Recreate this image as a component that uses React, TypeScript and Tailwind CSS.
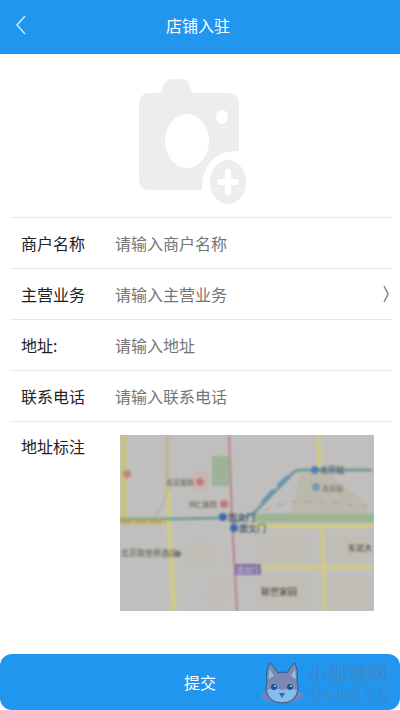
import type { ReactNode } from 'react';

const inputClass =
  'min-w-0 flex-1 bg-transparent text-base leading-6 text-[#555] outline-none placeholder:text-[#757575]';

function Row({ id, label, children }: { id: string; label: string; children: ReactNode }) {
  return (
    <div className="flex h-[51px] items-center border-b border-[#e9e9e9] pl-[11px]">
      <label htmlFor={id} className="w-[94px] shrink-0 text-base leading-6 text-[#222]">
        {label}
      </label>
      {children}
    </div>
  );
}

function CameraIcon() {
  return (
    <svg viewBox="0 0 108 126" className="h-[126px] w-[108px]" aria-hidden="true">
      <path
        fill="#ededed"
        d="M11 14H19Q23 14 24 8Q26 0 33 0H43Q49 0 51 8Q52 14 57 14H89Q100 14 100 26V72Q80 71 70 85Q62 96 63 111H11Q0 111 0 99V26Q0 14 11 14Z"
      />
      <ellipse cx="48" cy="62" rx="22" ry="27" fill="#fff" />
      <ellipse cx="83" cy="38" rx="6" ry="7" fill="#fff" />
      <ellipse cx="89" cy="103" rx="18" ry="22" fill="#ededed" />
      <path d="M89 93V113M81 103H97" stroke="#fff" strokeWidth="6" strokeLinecap="round" />
    </svg>
  );
}

function MapPreview() {
  return (
    <svg
      viewBox="0 0 254 176"
      preserveAspectRatio="none"
      className="h-[176px] w-full bg-[#c0bfbd]"
      role="img"
      aria-label="地址标注"
    >
      <defs>
        <filter id="soft" x="-5%" y="-5%" width="110%" height="110%">
          <feGaussianBlur stdDeviation="0.9" />
        </filter>
      </defs>
      <rect width="254" height="176" fill="#c0bfbd" />
      <g filter="url(#soft)" fill="none">
        <path d="M180 38H208L248 70V83H171Z" fill="#bbb8ad" />
        <path
          d="M70 108h24v22H64zM90 142h16v26H86zM137 100h50v28h-50zM204 100h44v26h-44zM139 140h50v34h-50zM204 140h44v34h-44z"
          fill="#bfbdb6"
        />
        <path d="M72 36h16v20H72z" fill="#c6b6b4" />
        <rect x="92" y="21" width="17" height="30" fill="#9cb397" />
        <path d="M132 83H254" stroke="#9cb695" strokeWidth="9" />
        <path d="M4 0V83M0 87H46" stroke="#c9c178" strokeWidth="5" />
        <path d="M47 0V58" stroke="#bdb58a" strokeWidth="3" />
        <path d="M49 56V88L54 176" stroke="#d0c986" strokeWidth="5" />
        <path d="M47 58Q44 72 33 83" stroke="#a3a3a3" strokeWidth="1" />
        <path d="M199 0V38M132 91H254M202 92L205 176M120 132H254" stroke="#d0c986" strokeWidth="4" />
        <path d="M109 0L112 85L117 176" stroke="#b9808e" strokeWidth="2" />
        <path d="M0 84H46L103 83" stroke="#739f9f" strokeWidth="3" />
        <path d="M0 86H46" stroke="#b5a268" strokeWidth="5" strokeDasharray="12 3" />
        <path d="M112 88L133 79L174 37Q177 35 182 35H252" stroke="#729a9b" strokeWidth="3" />
        <path d="M142 68L154 55M158 51L169 41" stroke="#6792ae" strokeWidth="4" />
        <path d="M132 82Q151 69 180 66L248 71" stroke="#a09d98" strokeWidth="1" strokeDasharray="7 7" />
        <circle cx="7" cy="39" r="4" fill="#c58482" />
        <circle cx="80" cy="47" r="4" fill="#c4797a" />
        <circle cx="104" cy="69" r="4" fill="#c4797a" />
        <circle cx="103" cy="82" r="4" fill="#416baa" />
        <circle cx="114" cy="93" r="4" fill="#416baa" />
        <circle cx="195" cy="35" r="4" fill="#537fa8" />
        <circle cx="196" cy="52" r="4" fill="#769ab1" />
        <rect x="115" y="129" width="26" height="11" fill="#8472a6" />
        <circle cx="58" cy="119" r="3" fill="#77736e" />
        <g fontFamily="'Noto Sans CJK SC', sans-serif" fontSize="7" fontWeight="700" fill="#77736f">
          <text x="46" y="50">北京医院</text>
          <text x="69" y="72">同仁医院</text>
          <text x="1" y="121" fontSize="8">北京新世界酒店</text>
          <text x="200" y="38" fontSize="8" fill="#53616b">北京站</text>
          <text x="202" y="56">北京站</text>
          <text x="108" y="86" fontSize="9" fill="#46566b">崇文门</text>
          <text x="119" y="97" fontSize="9" fill="#46566b">崇文门</text>
          <text x="117" y="138" fill="#bcb5ca">崇文门</text>
          <text x="141" y="160" fontSize="9" fill="#5e5549">新世家园</text>
          <text x="228" y="116" fontSize="8" fill="#5e5549">东花大</text>
        </g>
      </g>
    </svg>
  );
}

function FoxIcon() {
  return (
    <svg viewBox="0 0 44 44" className="h-11 w-11 shrink-0" aria-hidden="true">
      <ellipse cx="22" cy="34" rx="21" ry="7" fill="#7381bc" />
      <path
        d="M10 1Q12 2 18 11Q22 9 27 11Q32 2 35 1Q39 9 37 18Q38 22 38 27Q36 41 22 41Q8 41 6 27Q6 22 7 18Q5 9 10 1Z"
        fill="#7c87b3"
        stroke="#28618f"
      />
      <path d="M10 7L14 14L8 17ZM35 7L31 14L36 17Z" fill="#8fbfe3" />
      <path d="M7 28Q14 25 22 28Q30 25 37 28Q35 40 22 40Q9 40 7 28Z" fill="#85bdec" />
      <circle cx="14" cy="25" r="3" fill="#17568a" />
      <circle cx="30" cy="25" r="3" fill="#17568a" />
      <circle cx="15" cy="24" r="1" fill="#a6d3f5" />
      <circle cx="31" cy="24" r="1" fill="#a6d3f5" />
      <path d="M19 31H25L22 36Z" fill="#31699a" />
    </svg>
  );
}

export default function App() {
  return (
    <div className="flex min-h-screen flex-col bg-white font-['Noto_Sans_CJK_SC',sans-serif]">
      <header className="grid h-[54px] grid-cols-[44px_1fr_48px] items-center border-b border-[#3488cc] bg-[#2196ee] pb-[3px] text-white">
        <button type="button" aria-label="返回" className="flex h-full items-center pl-4">
          <svg viewBox="0 0 10 20" className="h-5 w-[10px]" fill="none" stroke="#c9e9ff" strokeWidth="1.5">
            <path d="M9 1L1 10L9 19" />
          </svg>
        </button>
        <h1 className="text-center text-base leading-6">店铺入驻</h1>
      </header>
      <form className="flex flex-1 flex-col">
        <div className="ml-[10px] mr-2 flex h-[164px] justify-center border-b border-[#e9e9e9] pr-4 pt-[25px]">
          <button type="button" aria-label="上传照片" className="h-[126px]">
            <CameraIcon />
          </button>
        </div>
        <div className="pl-[10px] pr-2">
          <Row id="name" label="商户名称">
            <input id="name" placeholder="请输入商户名称" className={inputClass} />
          </Row>
          <Row id="business" label="主营业务">
            <input id="business" placeholder="请输入主营业务" className={inputClass} />
            <svg
              viewBox="0 0 6 16"
              className="mr-[3px] h-4 w-[6px]"
              fill="none"
              stroke="#888"
              strokeWidth="1.5"
              aria-hidden="true"
            >
              <path d="M1 0L5 8L1 16" />
            </svg>
          </Row>
          <Row id="address" label="地址:">
            <input id="address" placeholder="请输入地址" className={inputClass} />
          </Row>
          <Row id="phone" label="联系电话">
            <input id="phone" type="tel" placeholder="请输入联系电话" className={inputClass} />
          </Row>
        </div>
        <div className="flex items-start pl-[21px] pr-[26px] pt-3">
          <h2 className="w-[99px] shrink-0 text-base leading-6 text-[#222]">地址标注</h2>
          <div className="min-w-0 flex-1 pt-px">
            <MapPreview />
          </div>
        </div>
        <div className="relative mt-auto">
          <button type="submit" className="h-14 w-full rounded-xl bg-[#2196ee] text-base leading-6 text-white">
            提交
          </button>
          <div className="pointer-events-none absolute right-2 top-2 flex items-center text-[#4089c8]">
            <FoxIcon />
            <div className="w-[88px] text-center">
              <div className="text-xl leading-6">小狐狸网</div>
              <div className="font-['Liberation_Sans',sans-serif] text-base leading-5">XHUKS.CN</div>
            </div>
          </div>
        </div>
      </form>
    </div>
  );
}
